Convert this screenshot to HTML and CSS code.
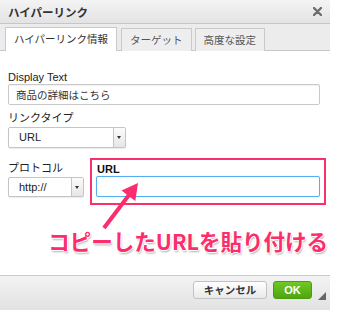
FILE: index.html
```html
<!DOCTYPE html>
<html lang="ja">
<head>
<meta charset="UTF-8">
<title>ハイパーリンク</title>
<link rel="stylesheet" href="styles.css">
</head>
<body>

<div class="dialog">
    <div class="titlebar">
        <span class="title">ハイパーリンク</span>
        <svg class="close" width="9" height="9" viewBox="0 0 9 9">
            <path d="M1 1 L8 8 M8 1 L1 8" stroke="#6e6e6e" stroke-width="2.4" stroke-linecap="round"/>
        </svg>
    </div>

    <div class="tabs">
        <div class="tab active">ハイパーリンク情報</div>
        <div class="tab">ターゲット</div>
        <div class="tab">高度な設定</div>
    </div>

    <div class="panel">
        <label class="label first">Display Text</label>
        <div class="textbox">商品の詳細はこちら</div>

        <label class="label gap">リンクタイプ</label>
        <div class="select select-type">
            <span class="select-value">URL</span>
            <span class="caret"></span>
        </div>

        <div class="row">
            <div class="protocol">
                <label class="label">プロトコル</label>
                <div class="select select-protocol">
                    <span class="select-value">http://</span>
                    <span class="caret"></span>
                </div>
            </div>
            <div class="url-box">
                <label class="label bold">URL</label>
                <div class="textbox focus"></div>
            </div>
        </div>

        <div class="note">コピーしたURLを貼り付ける</div>
    </div>

    <div class="footer">
        <button class="btn cancel">キャンセル</button>
        <button class="btn ok">OK</button>
        <span class="grip"></span>
    </div>

    <svg class="arrow" width="330" height="310" viewBox="0 0 330 310">
        <polygon points="102.4,226.8 126.8,194.6 121.5,190.6 138,183 135.3,201 130,197 105.6,229.2" fill="#fb2d6c"/>
    </svg>
</div>

</body>
</html>
```

FILE: styles.css
```css
body {
    margin: 0;
    background: #fff;
    font-family: 'Liberation Sans', 'Noto Sans CJK JP', sans-serif;
    color: #222;
}

.dialog {
    position: relative;
    width: 330px;
    height: 310px;
    overflow: hidden;
    background: #fff;
}

.titlebar {
    height: 23px;
    border-bottom: 1px solid #c6c6c6;
    background: linear-gradient(#f4f4f4, #e3e3e3);
    display: flex;
    align-items: center;
    justify-content: space-between;
    padding: 0 8px;
}

.title {
    font-family: 'Noto Sans CJK JP', sans-serif;
    font-size: 11.5px;
    font-weight: bold;
    color: #333;
}

.close {
    margin-right: 0;
}

.tabs {
    height: 26px;
    background: #ececec;
    border-bottom: 1px solid #c8c8c8;
    display: flex;
    align-items: flex-end;
    gap: 3px;
    padding-left: 5px;
}

.tab {
    height: 22px;
    line-height: 22px;
    padding: 0 8px;
    border: 1px solid #c9c9c9;
    border-bottom: none;
    background: #eeeeee;
    font-family: 'Noto Sans CJK JP', sans-serif;
    font-size: 10.5px;
    color: #555;
    margin-bottom: -1px;
}

.tab.active {
    background: #fff;
    height: 23px;
    color: #333;
    margin-right: 1px;
}

.panel {
    box-sizing: border-box;
    height: 224px;
    padding: 17px 10px 0 8px;
}

.label {
    display: block;
    font-size: 11px;
    line-height: 14px;
    color: #222;
    margin-bottom: 2px;
}

.label.first {
    margin-top: 2px;
    margin-bottom: 0;
}

.label.gap {
    margin-top: 6px;
}

.label.bold {
    font-weight: bold;
    color: #111;
    line-height: 13px;
    margin-bottom: 0;
    margin-left: 1px;
}

.textbox {
    box-sizing: border-box;
    height: 21px;
    border: 1px solid #c9c9c9;
    border-radius: 2px;
    padding: 0 7px;
    font-family: 'Noto Sans CJK JP', sans-serif;
    font-size: 10.5px;
    line-height: 19px;
    color: #333;
    box-shadow: inset 0 1px 1px rgba(0, 0, 0, 0.06);
}

.textbox.focus {
    border: 1px solid #55aef0;
    box-shadow: 0 0 1px #8fcaf5;
}

.select {
    box-sizing: border-box;
    height: 21px;
    border: 1px solid #c4c4c4;
    border-radius: 2px;
    display: flex;
    align-items: stretch;
    background: #fff;
    box-shadow: 0 1px 1px rgba(0, 0, 0, 0.08);
}

.select-type {
    width: 118px;
}

.select-protocol {
    width: 76px;
    height: 20px;
}

.select-value {
    flex: 1;
    padding-left: 10px;
    font-size: 11px;
    line-height: 19px;
    color: #222;
}

.caret {
    width: 11px;
    border-left: 1px solid #c4c4c4;
    background: linear-gradient(#fbfbfb, #e6e6e6);
    position: relative;
}

.caret::after {
    content: '';
    position: absolute;
    left: 3px;
    top: 8px;
    border-left: 2.5px solid transparent;
    border-right: 2.5px solid transparent;
    border-top: 3px solid #333;
}

.row {
    display: flex;
    align-items: flex-start;
    gap: 6px;
    margin-top: 10px;
}

.protocol {
    margin-top: 3px;
}

.url-box {
    flex: 1;
    margin-right: -6px;
    border: 2px solid #f9306b;
    padding: 3px 4px 6px 4px;
}

.note {
    margin-top: 24px;
    margin-right: -8px;
    text-align: right;
    white-space: nowrap;
    font-family: 'Noto Sans CJK JP', sans-serif;
    font-size: 21.5px;
    font-weight: bold;
    line-height: 24px;
    color: #fb2d6c;
    text-shadow: -1px 0 #fff, 1px 0 #fff, 0 -1px #fff, 0 1px #fff, 1px 2px 2px rgba(0, 0, 0, 0.3);
}

.footer {
    height: 35px;
    box-sizing: border-box;
    border-top: 1px solid #cacaca;
    background: linear-gradient(#f3f3f3, #e2e2e2);
    display: flex;
    justify-content: flex-end;
    align-items: flex-start;
    gap: 6px;
    padding: 5px 4px 0 0;
}

.btn {
    box-sizing: border-box;
    height: 18px;
    padding: 0;
    border: 1px solid #c2c2c2;
    border-radius: 3px;
    background: linear-gradient(#ffffff, #e9e9e9);
    font-family: 'Noto Sans CJK JP', sans-serif;
    font-size: 10.5px;
    font-weight: bold;
    line-height: 16px;
    color: #333;
    white-space: nowrap;
}

.btn.cancel {
    width: 74px;
}

.btn.ok {
    width: 39px;
    border-color: #4b9c12;
    background: linear-gradient(#6fc925, #4fa50f);
    color: #fff;
    font-family: 'Liberation Sans', sans-serif;
    font-size: 11px;
}

.grip {
    width: 0;
    height: 0;
    margin-top: 11px;
    border-left: 8px solid transparent;
    border-bottom: 8px solid #666;
}

.arrow {
    position: absolute;
    left: 0;
    top: 0;
    pointer-events: none;
}
```
